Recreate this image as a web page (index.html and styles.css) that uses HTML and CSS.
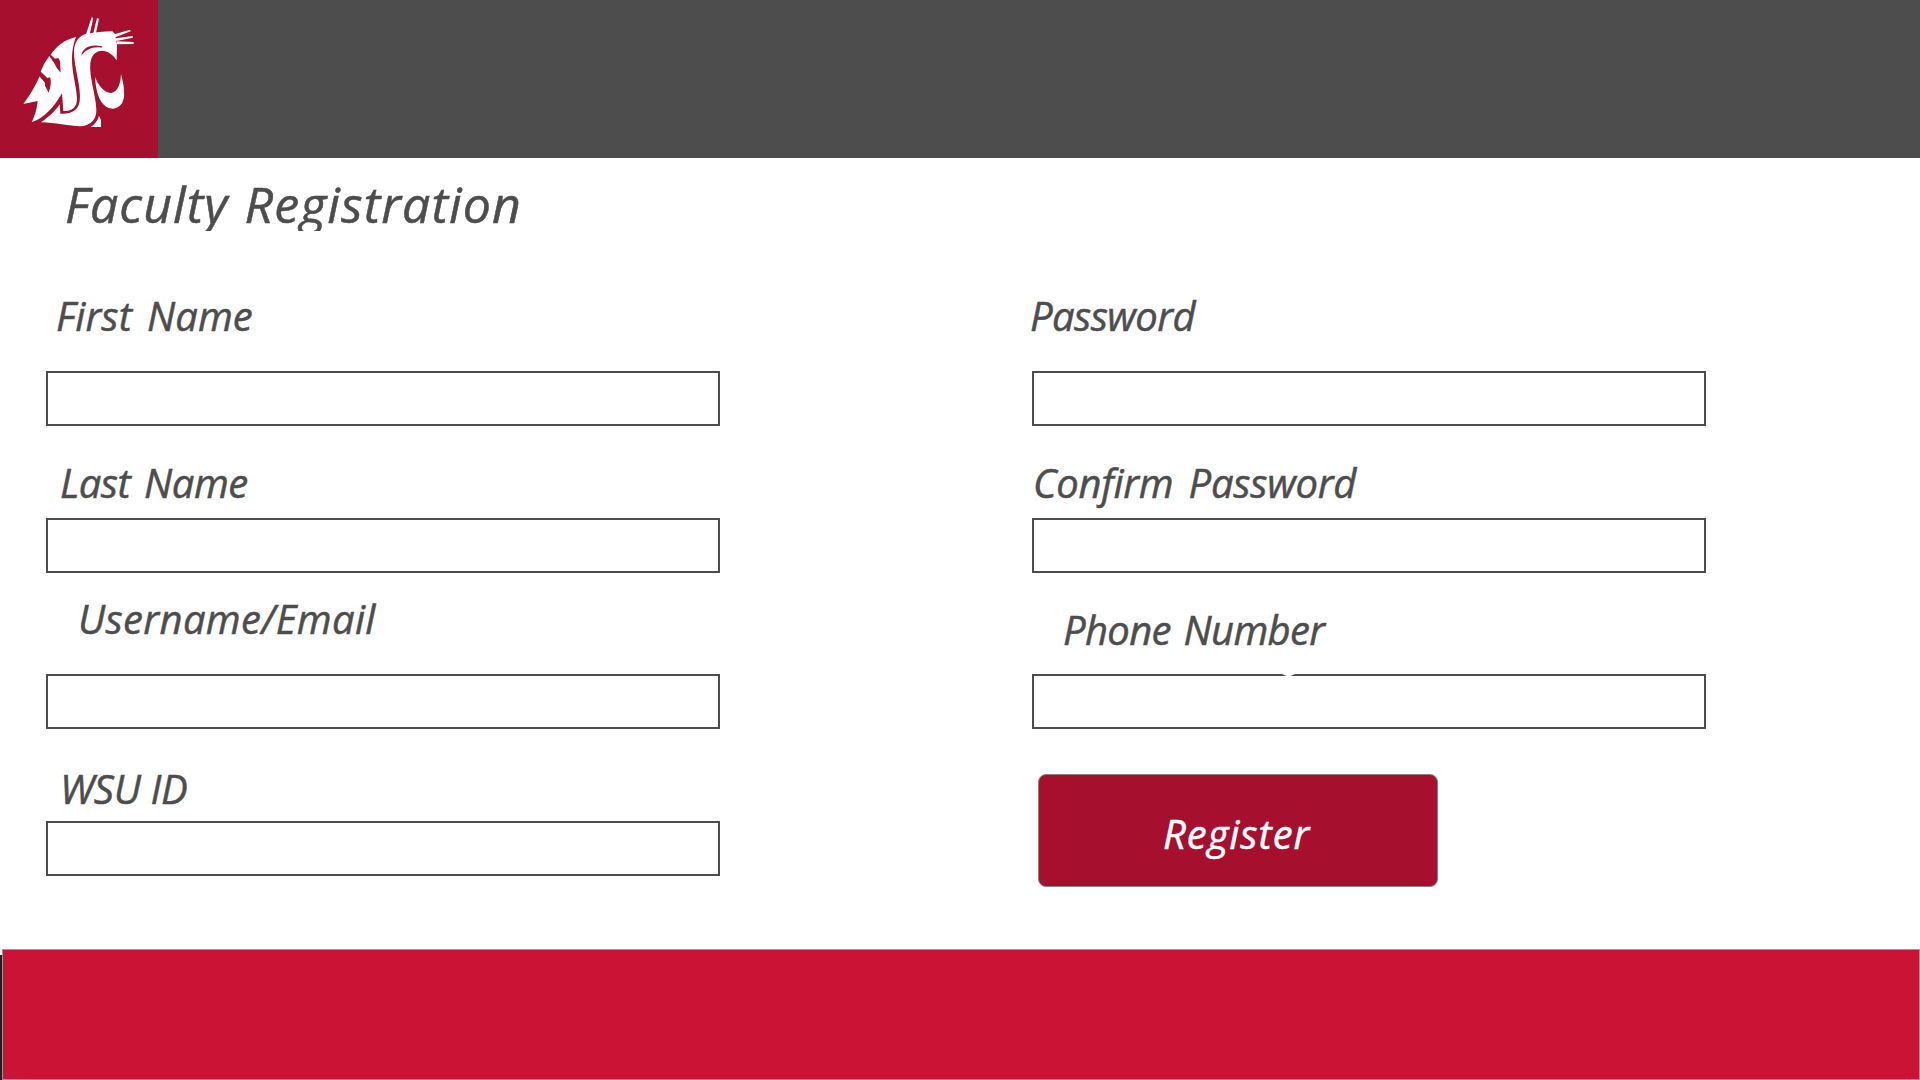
FILE: index.html
```html
<!DOCTYPE html>
<html lang="en">
<head>
<meta charset="utf-8">
<title>Faculty Registration</title>
<link rel="stylesheet" href="styles.css">
</head>
<body>
<header class="topbar">
  <svg class="logo" viewBox="0 0 474 474" role="img" aria-label="WSU">
    <rect width="474" height="474" fill="#a60f2d"/>
    <g fill="#fff">
      <path d="M228 111C192 119 170 139 152 164L165 176 175 174 180 184 182 218 170 203 163 190 148 168C136 184 128 199 122 215L142 234 150 232C155 248 151 264 146 278L135 257 135 248 118 229C111 251 92 282 70 312L113 303C111 328 103 350 95 367C135 354 163 319 186 280L190 333C218 334 231 320 231 296C230 246 200 181 228 111Z"/>
      <path d="M259 101C235 107 223 128 222 153C221 201 245 263 239 304C234 333 213 343 181 341L179 313C163 337 143 353 123 367C163 368 210 378 240 379C273 378 291 356 289 327C286 278 267 230 271 190C274 164 289 152 307 152C325 154 339 164 350 181L351 136 345 102 337 94C310 95 287 97 259 101Z"/>
      <path d="M285 231C294 254 311 278 333 279C354 277 362 249 363 222C370 248 374 270 372 291C368 315 354 326 337 326C301 323 288 279 285 231Z"/>
      <path d="M297 347C293 363 283 374 272 381L303 381 303 360Z"/>
      <path d="M258 103L275 52 280 54 269 103ZM280 99L291 54 297 56 288 99ZM343 103L390 89 392 94 346 112ZM347 115L398 108 399 113 349 123ZM350 124L401 126 401 132 350 133Z"/>
    </g>
    <path d="M244 167C247 143 273 130 306 139L305 143C278 139 258 148 244 167Z" fill="#a60f2d"/>
  </svg>
</header>
<main class="page">
  <h1 class="title">Faculty Registration</h1>
  <form class="form">
    <div class="column">
      <label class="field first-name"><span>First Name</span><input type="text"></label>
      <label class="field last-name"><span>Last Name</span><input type="text"></label>
      <label class="field username"><span>Username/Email</span><input type="text"></label>
      <label class="field wsu-id"><span>WSU ID</span><input type="text"></label>
    </div>
    <div class="column">
      <label class="field password"><span>Password</span><input type="password"></label>
      <label class="field confirm"><span>Confirm Password</span><input type="password"></label>
      <label class="field phone"><span>Phone Number</span><input type="text"></label>
      <button class="register" type="button">Register</button>
    </div>
  </form>
</main>
<footer class="footer"><div class="band"></div></footer>
</body>
</html>
```
FILE: styles.css
```css
* { box-sizing: border-box; }
body {
  margin: 0;
  height: 1080px;
  display: flex;
  flex-direction: column;
  overflow: hidden;
  background: #fff;
  color: #4d4d4d;
  font: italic 500 40px/40px "Open Sans", sans-serif;
  -webkit-text-stroke: 0.5px currentColor;
}
.topbar { height: 158px; background: #4d4d4d; }
.logo { display: block; width: 158px; height: 158px; }
.page { height: 791px; }
.title {
  margin: 0;
  padding: 21px 0 0 65px;
  height: 73px;
  overflow: hidden;
  font-size: 50px;
  line-height: 50px;
  font-weight: 500;
  letter-spacing: 1.1px;
  word-spacing: 2px;
  white-space: nowrap;
}
.form {
  display: grid;
  grid-template-columns: 674px 674px;
  column-gap: 312px;
  padding: 62px 0 0 46px;
}
.column { display: flex; flex-direction: column; }
.field {
  display: flex;
  flex-direction: column;
  justify-content: space-between;
  white-space: nowrap;
}
.field input {
  height: 55px;
  width: 674px;
  border: 2px solid #4d4d4d;
  border-radius: 0;
  background: #fff;
  padding: 0 12px;
  font: inherit;
}
.first-name, .password { height: 133px; padding-top: 3px; }
.last-name, .confirm { height: 147px; padding-top: 37px; }
.username { height: 156px; padding-top: 26px; }
.phone { height: 156px; padding-top: 37px; position: relative; }
.wsu-id { height: 147px; padding-top: 40px; }
.first-name span { margin-left: 10px; letter-spacing: 0.1px; word-spacing: 4.5px; }
.last-name span { margin-left: 14px; letter-spacing: -0.5px; word-spacing: 4px; }
.username span { margin-left: 32px; letter-spacing: 0.35px; }
.wsu-id span { margin-left: 14px; letter-spacing: -0.3px; }
.password span { margin-left: -2px; letter-spacing: -0.6px; }
.confirm span { margin-left: 1px; letter-spacing: -0.27px; word-spacing: 5px; }
.phone span { margin-left: 31px; letter-spacing: -0.67px; word-spacing: 3px; }

/* small white pointer tip over the top border of the phone field */
.phone::after {
  content: "";
  position: absolute;
  left: 250px;
  top: 101px;
  width: 13px;
  height: 2px;
  background: #fff;
  clip-path: polygon(0 0, 100% 0, 65% 100%, 35% 100%);
}
.register {
  width: 400px;
  height: 113px;
  margin: 45px 0 0 6px;
  padding: 6px 0 0 124px;
  border: 1px solid #858585;
  border-radius: 8px;
  background: #a60f2d;
  color: #fff;
  font: inherit;
  letter-spacing: 0.93px;
  text-align: left;
}
.footer {
  height: 131px;
  padding-left: 2px;
  background: linear-gradient(#fff 6px, #1b2223 6px);
}
.band { height: 131px; border: 1px solid #979797; background: #ca1335; }
```
